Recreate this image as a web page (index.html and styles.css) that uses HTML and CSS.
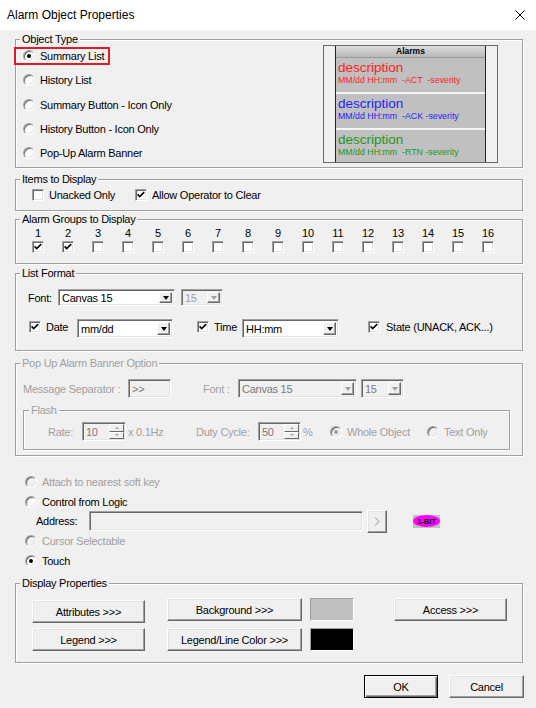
FILE: index.html
```html
<!DOCTYPE html>
<html>
<head>
<meta charset="utf-8">
<title>Alarm Object Properties</title>
<link rel="stylesheet" href="styles.css">
</head>
<body>
<div class="titlebar">
  <span class="title">Alarm Object Properties</span>
  <svg class="close" width="10" height="10" viewBox="0 0 10 10"><path d="M0.5 0.5 L9.5 9.5 M9.5 0.5 L0.5 9.5" stroke="#000" stroke-width="1" fill="none"/></svg>
</div>
<div class="content">
  <section class="grp g-type">
    <div class="gl">Object Type</div>
    <div class="type-wrap">
      <div class="radios">
        <div class="opt hl"><span class="rb on"></span><span>Summary List</span></div>
        <div class="opt"><span class="rb"></span><span>History List</span></div>
        <div class="opt"><span class="rb"></span><span>Summary Button - Icon Only</span></div>
        <div class="opt"><span class="rb"></span><span>History Button - Icon Only</span></div>
        <div class="opt"><span class="rb"></span><span>Pop-Up Alarm Banner</span></div>
      </div>
      <div class="preview">
        <div class="plist">
          <div class="phead">Alarms</div>
          <div class="prow c-red"><div class="pd">description</div><div class="ps">MM/dd HH:mm&nbsp;&nbsp;-ACT&nbsp;&nbsp;-severity</div></div>
          <div class="psep"></div>
          <div class="prow c-blue"><div class="pd">description</div><div class="ps">MM/dd HH:mm&nbsp;&nbsp;-ACK&nbsp;-severity</div></div>
          <div class="psep"></div>
          <div class="prow c-green last"><div class="pd">description</div><div class="ps">MM/dd HH:mm&nbsp;&nbsp;-RTN&nbsp;-severity</div></div>
        </div>
      </div>
    </div>
  </section>

  <section class="grp g-items">
    <div class="gl">Items to Display</div>
    <div class="items-row">
      <div class="chk w-unacked"><span class="cb"></span><span>Unacked Only</span></div>
      <div class="chk"><span class="cb"><svg width="8" height="8" viewBox="0 0 8 8"><polyline points="0.6,3.4 2.7,5.6 7.2,1.1" fill="none" stroke="#000" stroke-width="1.6"/></svg></span><span>Allow Operator to Clear</span></div>
    </div>
  </section>

  <section class="grp g-groups">
    <div class="gl">Alarm Groups to Display</div>
    <div class="groups">
      <div class="gcol"><span class="gnum">1</span><span class="cb"><svg width="8" height="8" viewBox="0 0 8 8"><polyline points="0.6,3.4 2.7,5.6 7.2,1.1" fill="none" stroke="#000" stroke-width="1.6"/></svg></span></div>
      <div class="gcol"><span class="gnum">2</span><span class="cb"><svg width="8" height="8" viewBox="0 0 8 8"><polyline points="0.6,3.4 2.7,5.6 7.2,1.1" fill="none" stroke="#000" stroke-width="1.6"/></svg></span></div>
      <div class="gcol"><span class="gnum">3</span><span class="cb"></span></div>
      <div class="gcol"><span class="gnum">4</span><span class="cb"></span></div>
      <div class="gcol"><span class="gnum">5</span><span class="cb"></span></div>
      <div class="gcol"><span class="gnum">6</span><span class="cb"></span></div>
      <div class="gcol"><span class="gnum">7</span><span class="cb"></span></div>
      <div class="gcol"><span class="gnum">8</span><span class="cb"></span></div>
      <div class="gcol"><span class="gnum">9</span><span class="cb"></span></div>
      <div class="gcol"><span class="gnum">10</span><span class="cb"></span></div>
      <div class="gcol"><span class="gnum">11</span><span class="cb"></span></div>
      <div class="gcol"><span class="gnum">12</span><span class="cb"></span></div>
      <div class="gcol"><span class="gnum">13</span><span class="cb"></span></div>
      <div class="gcol"><span class="gnum">14</span><span class="cb"></span></div>
      <div class="gcol"><span class="gnum">15</span><span class="cb"></span></div>
      <div class="gcol"><span class="gnum">16</span><span class="cb"></span></div>
    </div>
  </section>

  <section class="grp g-list">
    <div class="gl">List Format</div>
    <div class="lf-row1">
      <span class="lbl w-font">Font:</span>
      <div class="combo w-canvas"><span class="val">Canvas 15</span><span class="dd"><i class="tri"></i></span></div>
      <div class="combo dis w-size"><span class="val">15</span><span class="dd"><i class="tri"></i></span></div>
    </div>
    <div class="lf-row2">
      <div class="chk w-date"><span class="cb"><svg width="8" height="8" viewBox="0 0 8 8"><polyline points="0.6,3.4 2.7,5.6 7.2,1.1" fill="none" stroke="#000" stroke-width="1.6"/></svg></span><span>Date</span></div>
      <div class="combo tall w-datec"><span class="val">mm/dd</span><span class="dd"><i class="tri"></i></span></div>
      <div class="chk w-time"><span class="cb"><svg width="8" height="8" viewBox="0 0 8 8"><polyline points="0.6,3.4 2.7,5.6 7.2,1.1" fill="none" stroke="#000" stroke-width="1.6"/></svg></span><span>Time</span></div>
      <div class="combo tall w-timec"><span class="val">HH:mm</span><span class="dd"><i class="tri"></i></span></div>
      <div class="chk w-state"><span class="cb"><svg width="8" height="8" viewBox="0 0 8 8"><polyline points="0.6,3.4 2.7,5.6 7.2,1.1" fill="none" stroke="#000" stroke-width="1.6"/></svg></span><span>State (UNACK, ACK...)</span></div>
    </div>
  </section>

  <section class="grp dis g-popup">
    <div class="gl">Pop Up Alarm Banner Option</div>
    <div class="pu-row">
      <span class="lbl w-msg">Message Separator :</span>
      <div class="field dis w-sep"><span class="val">&gt;&gt;</span></div>
      <span class="lbl w-pfont">Font :</span>
      <div class="combo tall dis2 w-pcanvas"><span class="val">Canvas 15</span><span class="dd"><i class="tri"></i></span></div>
      <div class="combo tall dis2 w-psize"><span class="val">15</span><span class="dd"><i class="tri"></i></span></div>
    </div>
    <section class="grp dis g-flash">
      <div class="gl">Flash</div>
      <div class="fl-row">
        <span class="lbl w-rate">Rate:</span>
        <div class="spin w-rspin"><span class="val">10</span><span class="sb"><span class="sbu"><i class="tup"></i></span><span class="sbd"><i class="tdn"></i></span></span></div>
        <span class="lbl w-hz">x 0.1Hz</span>
        <span class="lbl w-duty">Duty Cycle:</span>
        <div class="spin w-dspin"><span class="val">50</span><span class="sb"><span class="sbu"><i class="tup"></i></span><span class="sbd"><i class="tdn"></i></span></span></div>
        <span class="lbl w-pct">%</span>
        <div class="opt2 w-whole"><span class="rb dis on"></span><span>Whole Object</span></div>
        <div class="opt2"><span class="rb dis"></span><span>Text Only</span></div>
      </div>
    </section>
  </section>

  <div class="options">
    <div class="orow dis"><span class="rb dis"></span><span>Attach to nearest soft key</span></div>
    <div class="orow r2"><span class="rb"></span><span>Control from Logic</span></div>
    <div class="addr-row">
      <span class="lbl w-addr">Address:</span>
      <div class="field dis w-addrf"></div>
      <div class="btn abtn"><svg width="6" height="9" viewBox="0 0 6 9"><path d="M1 0.5 L5 4.5 L1 8.5" fill="none" stroke="#8a8a8a" stroke-width="1"/></svg></div>
      <div class="badge"><span>1-BIT</span></div>
    </div>
    <div class="orow dis r4"><span class="rb dis"></span><span>Cursor Selectable</span></div>
    <div class="orow r5"><span class="rb on"></span><span>Touch</span></div>
  </div>

  <section class="grp g-disp">
    <div class="gl">Display Properties</div>
    <div class="disp-row">
      <div class="dcol c1">
        <div class="btn w-attr">Attributes &gt;&gt;&gt;</div>
        <div class="btn w-attr">Legend &gt;&gt;&gt;</div>
      </div>
      <div class="dcol c2">
        <div class="btn w-bg">Background &gt;&gt;&gt;</div>
        <div class="btn w-bg">Legend/Line Color &gt;&gt;&gt;</div>
      </div>
      <div class="dcol c3">
        <div class="swatch sw-gray"></div>
        <div class="swatch sw-black"></div>
      </div>
      <div class="dcol c4">
        <div class="btn w-attr">Access &gt;&gt;&gt;</div>
      </div>
    </div>
  </section>

  <div class="actions">
    <div class="btn def w-ok">OK</div>
    <div class="btn w-cancel">Cancel</div>
  </div>
</div>
</body>
</html>
```

FILE: styles.css
```css
html, body {
  margin: 0;
  padding: 0;
}
body {
  width: 536px;
  height: 708px;
  overflow: hidden;
  background: #f0f0f0;
  font-family: "Liberation Sans", Arial, sans-serif;
  font-size: 11px;
  letter-spacing: -0.25px;
  color: #000;
}

/* title bar */
.titlebar {
  height: 30px;
  background: #fff;
  display: flex;
  align-items: center;
  justify-content: space-between;
  padding: 0 11px 0 7px;
  box-sizing: border-box;
  font-size: 12px;
  letter-spacing: 0;
}
.close { display: block; }

.content {
  padding: 0 13px 0 15px;
  display: flow-root;
}

/* group boxes */
.grp {
  border: 1px solid #a0a0a0;
  box-shadow: inset 1px 1px 0 #fff, 1px 1px 0 #fff;
}
.gl {
  width: fit-content;
  height: 14px;
  line-height: 14px;
  margin: -8px 0 0 4px;
  padding: 0 2px;
  background: #f0f0f0;
  white-space: nowrap;
}
.grp.dis .gl { color: #a0a0a0; }

.lbl { display: inline-block; flex: none; white-space: nowrap; }
.dis, .dis .lbl { color: #a0a0a0; }

/* radio / checkbox */
.rb {
  width: 12px;
  height: 12px;
  box-sizing: border-box;
  border-radius: 50%;
  background: #fff;
  border: 1px solid;
  border-color: #a0a0a0 #fff #fff #a0a0a0;
  box-shadow: inset 1px 1px 0 #696969, inset -1px -1px 0 #e3e3e3;
  display: flex;
  align-items: center;
  justify-content: center;
  flex: none;
}
.rb.on::after {
  content: "";
  width: 4px;
  height: 4px;
  border-radius: 50%;
  background: #000;
}
.rb.dis { background: #f0f0f0; }
.rb.dis.on::after { background: #a0a0a0; }

.cb {
  width: 12px;
  height: 12px;
  box-sizing: border-box;
  background: #fff;
  border: 1px solid;
  border-color: #a0a0a0 #fff #fff #a0a0a0;
  box-shadow: inset 1px 1px 0 #696969, inset -1px -1px 0 #e3e3e3;
  display: flex;
  align-items: center;
  justify-content: center;
  flex: none;
}
.cb svg { display: block; }

/* object type: border line at y=39 */
.g-type { margin-top: 9px; }
.type-wrap {
  display: flex;
  justify-content: space-between;
  align-items: flex-start;
  padding-bottom: 4px;
}
.radios {
  display: flex;
  flex-direction: column;
  gap: 6.25px;
  padding-top: 1px;
}
.opt {
  height: 18px;
  display: flex;
  align-items: center;
  gap: 5px;
  padding-left: 7px;
  box-sizing: border-box;
  white-space: nowrap;
}
.opt.hl {
  margin-left: -2px;
  padding-left: 9px;
  width: 96px;
  outline: 2px solid #e01b24;
  outline-offset: -2px;
}

.preview {
  margin-top: -1px;
  margin-right: 24px;
  width: 175px;
  height: 118px;
  box-sizing: border-box;
  border: 1px solid #6a6a6a;
  background: #f0f0f0;
  padding: 0 11px;
}
.plist {
  height: 100%;
  border-left: 1px solid #222;
  border-right: 1px solid #222;
  background: #c0c0c0;
  display: flex;
  flex-direction: column;
  letter-spacing: 0;
}
.phead {
  height: 12px;
  box-sizing: border-box;
  background: linear-gradient(#dcdcdc, #b8b8b8);
  border-bottom: 1px solid #9a9a9a;
  font-size: 8.5px;
  font-weight: bold;
  line-height: 11px;
  text-align: center;
}
.prow {
  height: 34px;
  box-sizing: border-box;
  padding: 2px 0 0 2px;
  white-space: nowrap;
}
.prow.last { flex: 1; }
.psep { height: 2px; background: #f4f4f4; }
.pd { font-size: 13.5px; line-height: 15px; }
.ps { font-size: 8.8px; line-height: 11px; }
.c-red { color: #ff2222; }
.c-blue { color: #2424ff; }
.c-green { color: #1e961e; }

/* items to display: border at 179 */
.g-items { margin-top: 11px; }
.items-row {
  display: flex;
  padding: 2px 0 8px 16px;
}
.chk {
  height: 14px;
  display: flex;
  align-items: center;
  gap: 5px;
  white-space: nowrap;
  flex: none;
}
.w-unacked { width: 103px; }

/* alarm groups: border at 219 */
.g-groups { margin-top: 8px; }
.groups {
  display: flex;
  gap: 18px;
  padding: 1px 0 10px 16px;
}
.gcol {
  width: 12px;
  display: flex;
  flex-direction: column;
  align-items: center;
}
.gnum {
  line-height: 13px;
  margin-bottom: 1px;
  white-space: nowrap;
  letter-spacing: 0;
}

/* fields & combos */
.field, .combo, .spin {
  box-sizing: border-box;
  background: #fff;
  border: 1px solid;
  border-color: #a0a0a0 #fff #fff #a0a0a0;
  box-shadow: inset 1px 1px 0 #696969, inset -1px -1px 0 #e3e3e3;
  display: flex;
  align-items: stretch;
  flex: none;
  height: 17px;
}
.combo.tall, .field, .spin { height: 19px; }
.val {
  flex: 1;
  padding-left: 3px;
  display: flex;
  align-items: center;
  white-space: nowrap;
  overflow: hidden;
}
.dd {
  width: 13px;
  margin: 2px 2px 2px 0;
  box-sizing: border-box;
  background: #f0f0f0;
  border: 1px solid;
  border-color: #fff #696969 #696969 #fff;
  box-shadow: inset -1px -1px 0 #a0a0a0;
  display: flex;
  align-items: center;
  justify-content: center;
}
.tri {
  width: 0;
  height: 0;
  border-left: 3.5px solid transparent;
  border-right: 3.5px solid transparent;
  border-top: 4px solid #000;
}
.combo.dis, .combo.dis2, .field.dis, .spin { background: #f0f0f0; }
.combo.dis .val { color: #a0a0a0; }
.combo.dis2 .val, .field.dis .val, .spin .val { color: #7a7a7a; }
.combo.dis .tri, .combo.dis2 .tri { border-top-color: #a0a0a0; }

/* list format: border at 273 */
.g-list { margin-top: 9px; }
.lf-row1 {
  display: flex;
  align-items: center;
  padding: 9px 0 0 12px;
}
.w-font { width: 30px; }
.w-canvas { width: 117px; }
.w-size { width: 42px; margin-left: 6px; }
.lf-row2 {
  display: flex;
  align-items: center;
  margin-top: 13px;
  padding: 0 0 12px 13px;
}
.lf-row2 .chk { margin-top: -4px; }
.w-date { width: 48px; }
.w-datec { width: 96px; }
.w-time { width: 45px; margin-left: 24px; }
.w-timec { width: 97px; }
.w-state { margin-left: 29px; gap: 6px; }

/* popup banner: border at 363 */
.g-popup { margin-top: 12px; }
.pu-row {
  display: flex;
  align-items: center;
  padding: 9px 0 0 7px;
}
.w-msg { width: 105px; }
.w-sep { width: 43px; }
.w-pfont { width: 35px; margin-left: 32px; }
.w-pcanvas { width: 119px; }
.w-psize { width: 43px; margin-left: 4px; }

/* flash: border at 410 */
.g-flash {
  margin: 12px 12px 5px 7px;
}
.g-flash .gl { margin-left: 5px; }
.fl-row {
  display: flex;
  align-items: center;
  padding: 5px 0 8px 24px;
  color: #a0a0a0;
}
.w-rate { width: 34px; }
.w-rspin { width: 44px; }
.w-hz { width: 68px; margin-left: 2px; }
.w-duty { width: 62px; }
.w-dspin { width: 43px; }
.w-pct { width: 27px; margin-left: 2px; }
.sb {
  width: 15px;
  margin: 1px 1px 1px 0;
  display: flex;
  flex-direction: column;
}
.sbu, .sbd {
  flex: 1;
  box-sizing: border-box;
  background: #f0f0f0;
  border: 1px solid;
  border-color: #fff #696969 #696969 #fff;
  display: flex;
  align-items: center;
  justify-content: center;
}
.tup, .tdn {
  width: 0;
  height: 0;
  border-left: 2px solid transparent;
  border-right: 2px solid transparent;
}
.tup { border-bottom: 2px solid #a0a0a0; }
.tdn { border-top: 2px solid #a0a0a0; }
.opt2 {
  display: flex;
  align-items: center;
  gap: 5px;
  white-space: nowrap;
  flex: none;
}
.w-whole { width: 97px; }

/* options */
.options {
  padding-left: 10px;
  margin-top: 18px;
}
.orow {
  height: 16px;
  display: flex;
  align-items: center;
  gap: 5px;
  white-space: nowrap;
}
.orow.r2 { margin-top: 4px; }
.orow.r4 { margin-top: 2px; }
.orow.r5 { margin-top: 4px; }
.addr-row {
  display: flex;
  align-items: center;
  height: 20px;
  margin-top: 1px;
  padding-left: 11px;
}
.w-addr { width: 53px; }
.w-addrf { width: 274px; height: 20px; }
.abtn {
  width: 20px;
  height: 20px;
  margin-left: 4px;
}
.badge {
  width: 27px;
  height: 13px;
  margin-left: 26px;
  background: #c0c0c0;
  display: flex;
  align-items: center;
  justify-content: center;
}
.badge span {
  width: 27px;
  height: 12px;
  border-radius: 50%;
  background: #ff00ff;
  font-size: 7.5px;
  font-weight: bold;
  letter-spacing: 0;
  display: flex;
  align-items: center;
  justify-content: center;
}

/* buttons */
.btn {
  box-sizing: border-box;
  height: 23px;
  background: #f0f0f0;
  border: 1px solid;
  border-color: #fff #696969 #696969 #fff;
  box-shadow: inset -1px -1px 0 #a0a0a0, inset 1px 1px 0 #e3e3e3;
  display: flex;
  align-items: center;
  justify-content: center;
  white-space: nowrap;
  flex: none;
}
.btn.def {
  border: 1px solid #000;
  box-shadow: inset 1px 1px 0 #fff, inset -1px -1px 0 #696969, inset -2px -2px 0 #a0a0a0;
}

/* display properties: border at 583 */
.g-disp { margin-top: 14px; }
.disp-row {
  display: flex;
  padding: 0 0 11px 16px;
}
.dcol {
  display: flex;
  flex-direction: column;
}
.c1 { padding-top: 10px; gap: 5px; }
.c2 { padding-top: 8px; gap: 7px; margin-left: 22px; }
.c3 { padding-top: 8px; gap: 7px; margin-left: 8px; }
.c4 { padding-top: 8px; margin-left: 40px; }
.w-attr { width: 113px; }
.w-bg { width: 135px; }
.swatch {
  width: 44px;
  height: 23px;
  box-sizing: border-box;
  border: 1px solid;
  border-color: #a0a0a0 #fff #fff #a0a0a0;
}
.sw-gray { background: #c0c0c0; }
.sw-black { background: #000; }

.actions {
  display: flex;
  justify-content: flex-end;
  gap: 11px;
  margin-top: 12px;
  margin-right: -1px;
}
.w-ok { width: 74px; }
.w-cancel { width: 75px; }
```
